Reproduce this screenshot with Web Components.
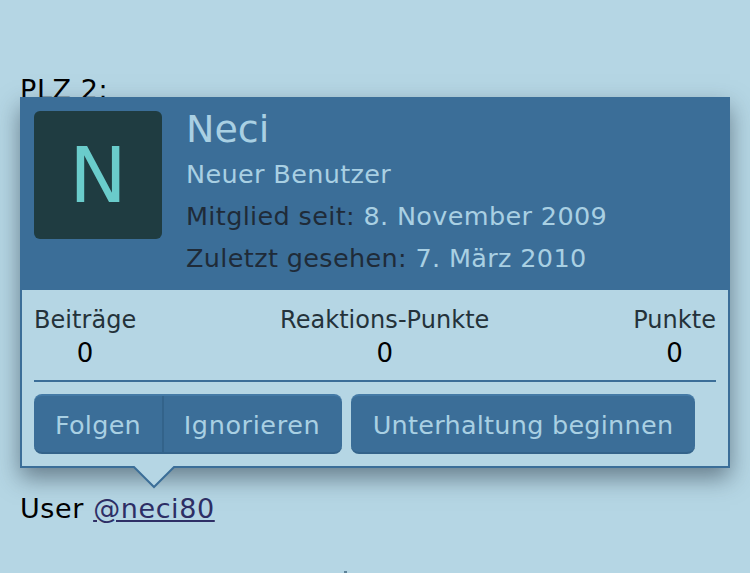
<!DOCTYPE html>
<html lang="de">
<head>
<meta charset="utf-8">
<title>Neci</title>
<style>
html, body { margin: 0; height: 100%; overflow: hidden; }
body { background: #b5d6e4; font-family: "DejaVu Sans", sans-serif; font-size: 27px; letter-spacing: .6px; color: #000; }
a { color: #2e2f66; }
</style>
</head>
<body>
<forum-post>
    <span slot="first">PLZ 2:</span>
    <span slot="last">User <a href="#">@neci80</a></span>
    <member-card name="Neci" title="Neuer Benutzer" joined="8. November 2009" seen="7. März 2010"></member-card>
</forum-post>

<template id="post-tpl">
    <style>
        :host { display: block; position: relative; height: 573px; padding: 74px 20px 0; box-sizing: border-box; }
        .line { height: 32px; line-height: 32px; }
        .gap { height: 387px; }
        ::slotted(span) { white-space: nowrap; }
        .card { position: absolute; left: 20px; top: 97px; }
        .dot { position: absolute; left: 344px; top: 571px; width: 3px; height: 2px; background: #5d8298; }
    </style>
    <div class="line"><slot name="first"></slot></div>
    <div class="gap"></div>
    <div class="line"><slot name="last"></slot></div>
    <div class="card"><slot></slot></div>
    <div class="dot"></div>
</template>

<template id="card-tpl">
    <style>
        :host { display: block; width: 710px; height: 371px; position: relative; font-family: "DejaVu Sans", sans-serif; letter-spacing: 0; }
        .box { box-sizing: border-box; height: 100%; border: 2px solid #3b6e98; background: #b5d6e4; box-shadow: 0 10px 22px rgba(40, 55, 70, .55); display: flex; flex-direction: column; }
        .top { background: #3b6e98; height: 191px; flex: none; display: flex; gap: 24px; padding: 12px 12px 0; box-sizing: border-box; }
        .avatar { width: 128px; height: 128px; flex: none; border-radius: 6px; background: #1f3c41; color: #6acccb; font-size: 77px; display: flex; align-items: center; justify-content: center; }
        .info { display: flex; flex-direction: column; }
        .name { font-size: 38px; line-height: 37px; color: #a9d0e3; }
        .rank { font-size: 25.5px; line-height: 42px; margin-top: 5px; color: #a9d0e3; letter-spacing: .35px; }
        .row { font-size: 25.5px; line-height: 42px; color: #1f2b38; letter-spacing: .35px; }
        .row span { color: #a9d0e3; }
        .stats { display: flex; justify-content: space-between; margin: 0 12px; padding: 14px 0 10px; border-bottom: 2px solid #3b6e98; }
        .actions { display: flex; gap: 9px; margin: 12px 12px 0; }
        .arrow { position: absolute; left: 113px; top: 369px; }
    </style>
    <div class="box">
        <div class="top">
            <div class="avatar" id="initial"></div>
            <div class="info">
                <div class="name" id="name"></div>
                <div class="rank" id="title"></div>
                <div class="row">Mitglied seit: <span id="joined"></span></div>
                <div class="row">Zuletzt gesehen: <span id="seen"></span></div>
            </div>
        </div>
        <div class="stats">
            <stat-item label="Beiträge" value="0"></stat-item>
            <stat-item label="Reaktions-Punkte" value="0"></stat-item>
            <stat-item label="Punkte" value="0"></stat-item>
        </div>
        <div class="actions">
            <button-group>
                <group-button style="width:128px">Folgen</group-button>
                <group-button divided style="width:180px">Ignorieren</group-button>
            </button-group>
            <button-group>
                <group-button style="width:344px">Unterhaltung beginnen</group-button>
            </button-group>
        </div>
    </div>
    <svg class="arrow" width="42" height="23" viewBox="0 0 42 23">
        <path d="M0 0 L21 21 L42 0" fill="#b5d6e4" stroke="#3b6e98" stroke-width="2"/>
    </svg>
</template>

<template id="stat-tpl">
    <style>
        :host { display: block; text-align: center; font-size: 24px; line-height: 32px; letter-spacing: .05px; }
        .label { color: #24323a; }
        .value { color: #000; line-height: 34px; font-size: 26px; }
    </style>
    <div class="label" id="label"></div>
    <div class="value" id="value"></div>
</template>

<template id="group-tpl">
    <style>
        :host { display: flex; height: 60px; box-sizing: border-box; border-radius: 8px; background: #3b6e98; border-bottom: 2px solid #33638a; border-top: 2px solid #447aa6; overflow: hidden; }
    </style>
    <slot></slot>
</template>

<template id="button-tpl">
    <style>
        :host { display: flex; align-items: center; justify-content: center; box-sizing: border-box; padding-top: 2px; font-size: 25.5px; letter-spacing: .25px; color: #a9d0e3; white-space: nowrap; }
        :host([divided]) { border-left: 2px solid #33638a; letter-spacing: .6px; padding-right: 2px; }
    </style>
    <slot></slot>
</template>

<script>
// small helper, all the elements do the same thing on connect
function shadow(el, id) {
    const root = el.attachShadow({ mode: 'open' });
    root.appendChild(document.getElementById(id).content.cloneNode(true));
    return root;
}

class ForumPost extends HTMLElement {
    constructor() {
        super();
        shadow(this, 'post-tpl');
    }
}

class MemberCard extends HTMLElement {
    connectedCallback() {
        const root = shadow(this, 'card-tpl');
        const name = this.getAttribute('name');
        root.getElementById('initial').textContent = name.charAt(0);
        root.getElementById('name').textContent = name;
        root.getElementById('title').textContent = this.getAttribute('title');
        root.getElementById('joined').textContent = this.getAttribute('joined');
        root.getElementById('seen').textContent = this.getAttribute('seen');
    }
}

class StatItem extends HTMLElement {
    connectedCallback() {
        const root = shadow(this, 'stat-tpl');
        root.getElementById('label').textContent = this.getAttribute('label');
        root.getElementById('value').textContent = this.getAttribute('value');
    }
}

class ButtonGroup extends HTMLElement {
    constructor() {
        super();
        shadow(this, 'group-tpl');
    }
}

class GroupButton extends HTMLElement {
    constructor() {
        super();
        shadow(this, 'button-tpl');
    }
}

customElements.define('stat-item', StatItem);
customElements.define('group-button', GroupButton);
customElements.define('button-group', ButtonGroup);
customElements.define('member-card', MemberCard);
customElements.define('forum-post', ForumPost);
</script>
</body>
</html>
